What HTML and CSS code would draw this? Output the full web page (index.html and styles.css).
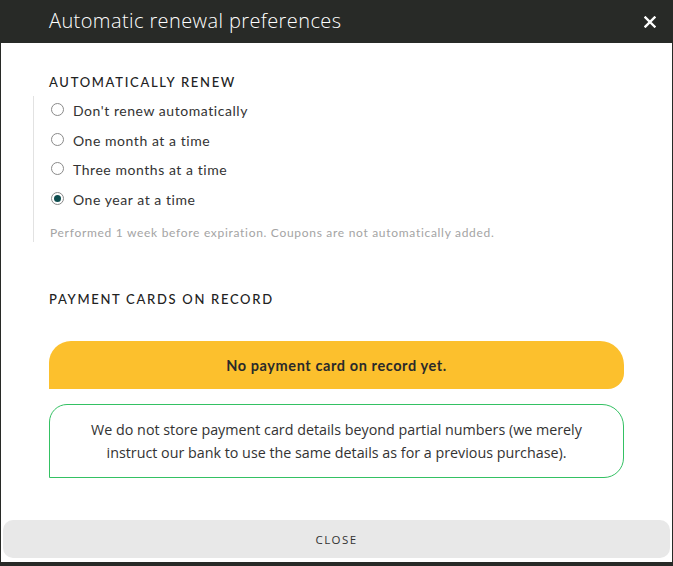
FILE: index.html
```html
<!DOCTYPE html>
<html>
<head>
<meta charset="utf-8">
<link rel="stylesheet" href="styles.css">
</head>
<body>
<div class="modal">
  <header class="modal-header">
    <h1 class="modal-title">Automatic renewal preferences</h1>
    <button class="close-x" aria-label="Close">
      <svg width="12" height="12" viewBox="0 0 12 12"><path d="M1.5 1.5 L10.5 10.5 M10.5 1.5 L1.5 10.5" stroke="#fff" stroke-width="2.4" stroke-linecap="square"/></svg>
    </button>
  </header>
  <div class="modal-body">
    <h2 class="section-title">AUTOMATICALLY RENEW</h2>
    <div class="options">
      <label class="option"><span class="radio"></span><span>Don't renew automatically</span></label>
      <label class="option"><span class="radio"></span><span>One month at a time</span></label>
      <label class="option"><span class="radio"></span><span>Three months at a time</span></label>
      <label class="option"><span class="radio checked"></span><span>One year at a time</span></label>
      <p class="note">Performed 1 week before expiration. Coupons are not automatically added.</p>
    </div>
    <h2 class="section-title cards-title">PAYMENT CARDS ON RECORD</h2>
    <div class="warning">No payment card on record yet.</div>
    <div class="info">We do not store payment card details beyond partial numbers (we merely instruct our bank to use the same details as for a previous purchase).</div>
  </div>
  <div class="modal-footer">
    <button class="close-btn">CLOSE</button>
  </div>
</div>
</body>
</html>
```
FILE: styles.css
```css
html, body {
  margin: 0;
  padding: 0;
  background: #282a27;
}
.modal {
  width: 671px;
  height: 562px;
  border-left: 1px solid #282a27;
  border-right: 1px solid #282a27;
  background: #fff;
  display: flex;
  flex-direction: column;
  box-sizing: content-box;
}
.modal-header {
  height: 43px;
  background: #282a27;
  display: flex;
  align-items: center;
  justify-content: space-between;
  padding: 0 16px 0 48px;
}
.modal-title {
  margin: 0;
  font-family: "Open Sans", sans-serif;
  font-weight: 300;
  font-size: 20px;
  color: #fff;
  letter-spacing: 0.4px;
  position: relative;
  top: -1px;
}
.close-x {
  background: none;
  border: 0;
  padding: 0;
  width: 12px;
  height: 12px;
  display: flex;
}
.modal-body {
  flex: 1;
  padding: 31px 48px 0 48px;
}
.section-title {
  margin: 0;
  font-family: "Lato", sans-serif;
  font-weight: 500;
  font-size: 13px;
  letter-spacing: 1.7px;
  color: #222;
  line-height: 16px;
}
.options {
  margin: 6px 0 0 -16px;
  border-left: 1px solid #e2e2e2;
  padding: 0 0 0 16px;
}
.option {
  display: flex;
  align-items: center;
  height: 29.5px;
  font-family: "Lato", sans-serif;
  font-size: 14px;
  color: #333;
  letter-spacing: 0.55px;
}
.radio {
  width: 13px;
  height: 13px;
  border: 1px solid #8a8a8a;
  border-radius: 50%;
  box-sizing: border-box;
  margin: 0 9px 0 1px;
  display: inline-flex;
  align-items: center;
  justify-content: center;
  position: relative;
  top: -1px;
}
.radio.checked::after {
  content: "";
  width: 7px;
  height: 7px;
  border-radius: 50%;
  background: #0e4d4f;
}
.note {
  margin: 0;
  padding: 11px 0 0 0;
  height: 17px;
  font-family: "Lato", sans-serif;
  font-size: 12px;
  color: #a4a4a4;
  letter-spacing: 0.7px;
}
.cards-title {
  margin-top: 49px;
}
.warning {
  margin-top: 34px;
  height: 48px;
  background: #fcc02d;
  border-radius: 22px 24px 16px 0;
  display: flex;
  align-items: center;
  justify-content: center;
  font-family: "Lato", sans-serif;
  font-weight: 700;
  font-size: 14.5px;
  color: #2a2a2a;
  letter-spacing: 0.6px;
}
.info {
  margin-top: 15px;
  border: 1px solid #34c163;
  border-radius: 18px 22px 20px 0;
  padding: 13px 30px 13px 30px;
  text-align: center;
  font-family: "Open Sans", sans-serif;
  font-size: 14.3px;
  line-height: 23px;
  color: #333;
}
.modal-footer {
  padding: 0 2px 4px 2px;
}
.close-btn {
  width: 100%;
  height: 38px;
  border: 0;
  border-radius: 10px;
  background: #e8e8e8;
  font-family: "Open Sans", sans-serif;
  font-size: 11.5px;
  letter-spacing: 1.4px;
  color: #333;
}
```
